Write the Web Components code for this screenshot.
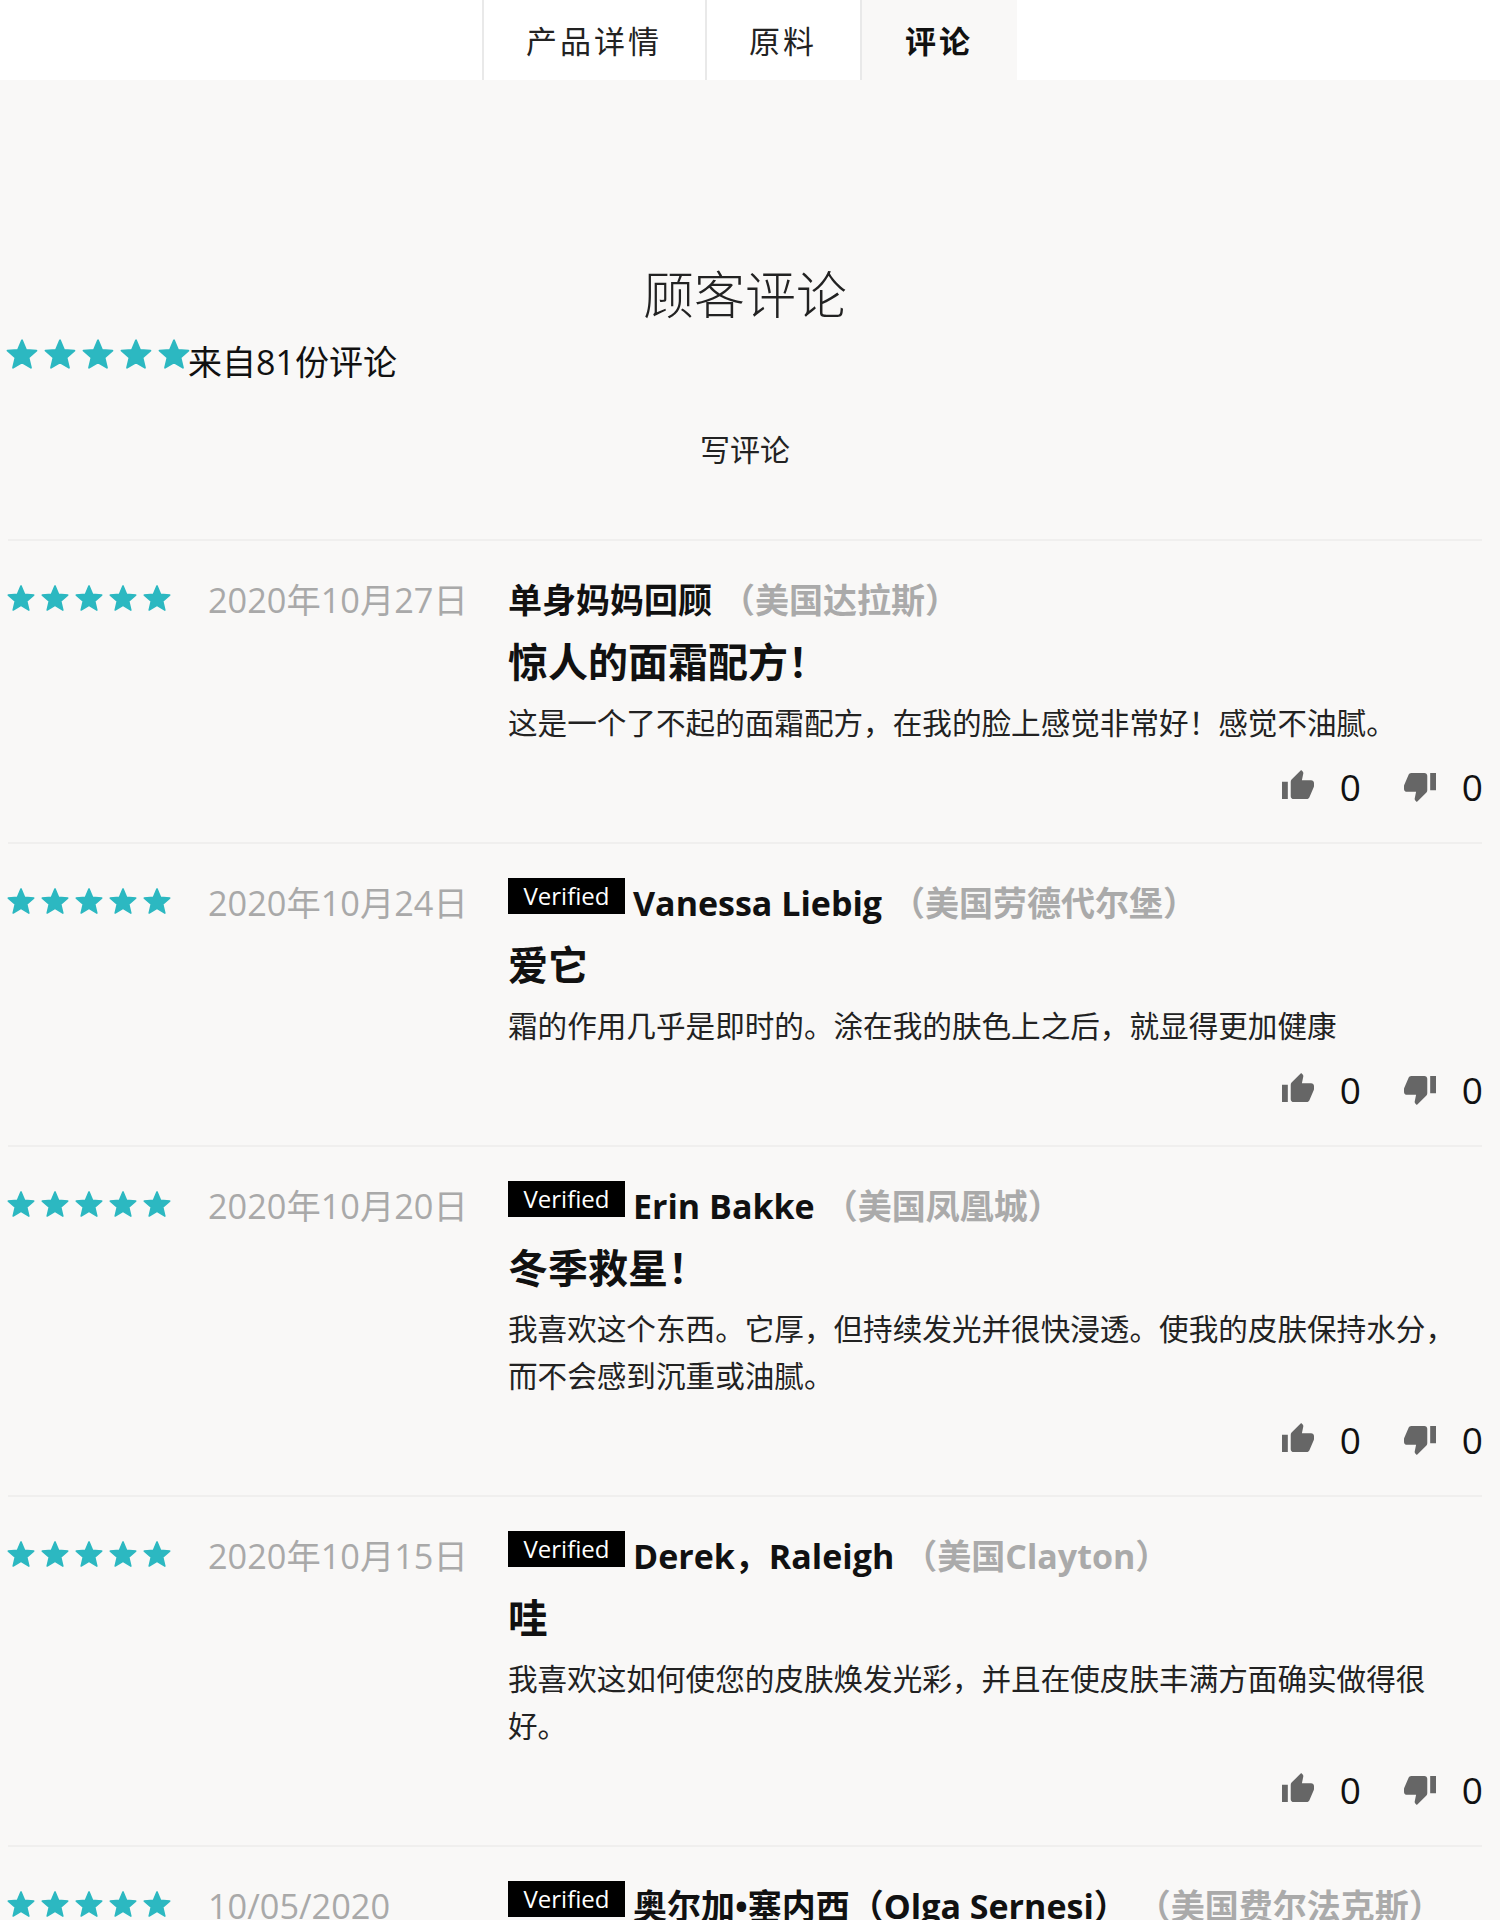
<!DOCTYPE html>
<html lang="zh">
<head>
<meta charset="utf-8">
<title>评论</title>
<style>
  html, body { height: 1920px; overflow: hidden; }
  body {
    margin: 0;
    background: #f9f8f7;
    color: #111;
    font-family: "Open Sans", "Noto Sans CJK SC", sans-serif;
  }
</style>
</head>
<body>
<tab-bar>
  <tab-item style="width:223px">产品详情</tab-item>
  <tab-item style="width:155px">原料</tab-item>
  <tab-item style="width:157px" active>评论</tab-item>
</tab-bar>

<review-list>
  <review-summary count="81"></review-summary>

  <review-card date="2020年10月27日" name="单身妈妈回顾" place="（美国达拉斯）" heading="惊人的面霜配方！">
    这是一个了不起的面霜配方，在我的脸上感觉非常好！感觉不油腻。
  </review-card>
  <review-card verified date="2020年10月24日" name="Vanessa Liebig" place="（美国劳德代尔堡）" heading="爱它">
    霜的作用几乎是即时的。涂在我的肤色上之后，就显得更加健康
  </review-card>
  <review-card verified date="2020年10月20日" name="Erin Bakke" place="（美国凤凰城）" heading="冬季救星！">
    我喜欢这个东西。它厚，但持续发光并很快浸透。使我的皮肤保持水分，而不会感到沉重或油腻。
  </review-card>
  <review-card verified date="2020年10月15日" name="Derek，Raleigh" place="（美国Clayton）" heading="哇">
    我喜欢这如何使您的皮肤焕发光彩，并且在使皮肤丰满方面确实做得很好。
  </review-card>
  <review-card verified date="10/05/2020" name="奥尔加•塞内西（Olga Sernesi）" place="（美国费尔法克斯）" heading="">
  </review-card>
</review-list>

<script>
const STAR = 'M12 17.27L18.18 21l-1.64-7.03L22 9.24l-7.19-.61L12 2 9.19 8.63 2 9.24l5.46 4.73L5.82 21z';
const THUMB_UP = 'M1 21h4V9H1v12zm22-11c0-1.1-.9-2-2-2h-6.31l.95-4.57.03-.32c0-.41-.17-.79-.44-1.06L14.17 1 7.59 7.59C7.22 7.95 7 8.45 7 9v10c0 1.1.9 2 2 2h9c.83 0 1.54-.5 1.84-1.22l3.02-7.05c.09-.23.14-.47.14-.73v-2z';
const THUMB_DOWN = 'M15 3H6c-.83 0-1.54.5-1.84 1.22l-3.02 7.05c-.09.23-.14.47-.14.73v2c0 1.1.9 2 2 2h6.31l-.95 4.57-.03.32c0 .41.17.79.44 1.06L9.83 23l6.59-6.59c.36-.36.58-.86.58-1.41V5c0-1.1-.9-2-2-2zm4 0v12h4V3h-4z';

class TabBar extends HTMLElement {
    constructor() {
        super();
        this.attachShadow({ mode: 'open' }).innerHTML = `
          <style>
            :host {
              display: flex;
              justify-content: center;
              height: 80px;
              padding-right: 2px;
              background: #fff;
            }
          </style>
          <slot></slot>`;
    }
}

class TabItem extends HTMLElement {
    constructor() {
        super();
        this.attachShadow({ mode: 'open' }).innerHTML = `
          <style>
            :host {
              display: flex;
              align-items: center;
              justify-content: center;
              box-sizing: border-box;
              padding-bottom: 2px;
              border-left: 2px solid #e9e9e9;
              font-size: 31px;
              letter-spacing: 3px;
              color: #222;
              background: #fff;
            }
            :host([active]) {
              background: #f9f8f7;
              font-weight: 700;
              color: #111;
            }
          </style>
          <slot></slot>`;
    }
}

class StarRow extends HTMLElement {
    constructor() {
        super();
        const size = Number(this.getAttribute('size')) || 32;
        const stars = Array.from({ length: 5 }, () =>
            `<svg viewBox="1 1 22 21" width="${size}" height="${size}"><path d="${STAR}" fill="#2cb8c1" stroke="#2cb8c1" stroke-width="1.2" stroke-linejoin="round"/></svg>`
        ).join('');
        this.attachShadow({ mode: 'open' }).innerHTML = `
          <style>
            :host { display: inline-flex; gap: var(--star-gap, 4px); line-height: 0; }
            svg { display: block; }
          </style>
          ${stars}`;
    }
}

class ReviewList extends HTMLElement {
    constructor() {
        super();
        this.attachShadow({ mode: 'open' }).innerHTML = `
          <style>
            :host { display: block; padding: 0 18px 0 8px; }
          </style>
          <slot></slot>`;
    }
}

class ReviewSummary extends HTMLElement {
    constructor() {
        super();
        const count = this.getAttribute('count');
        this.attachShadow({ mode: 'open' }).innerHTML = `
          <style>
            :host { display: block; height: 459px; box-sizing: border-box; padding-top: 178px; }
            h2 {
              margin: 0 0 1px;
              text-align: center;
              font-size: 51px;
              font-weight: 300;
              line-height: 72px;
              color: #222;
            }
            .score { display: flex; align-items: flex-start; height: 62px; margin-left: -2px; }
            star-row { --star-gap: 6px; margin-top: 7px; }
            .score span { font-size: 34px; line-height: 62px; color: #111; margin-left: -2px; }
            .write { text-align: center; font-size: 30px; line-height: 40px; margin-top: 37px; color: #222; }
          </style>
          <h2>顾客评论</h2>
          <div class="score"><star-row size="32"></star-row><span>来自${count}份评论</span></div>
          <div class="write">写评论</div>`;
    }
}

class ReviewCard extends HTMLElement {
    constructor() {
        super();
        const attr = (n) => this.getAttribute(n) || '';
        const badge = this.hasAttribute('verified') ? '<b class="badge">Verified</b>' : '';
        this.attachShadow({ mode: 'open' }).innerHTML = `
          <style>
            :host {
              display: grid;
              grid-template-columns: 500px 1fr;
              border-top: 2px solid #f0efee;
              padding: 34px 0 31px;
            }
            .left { display: flex; align-items: flex-start; padding-top: 8px; }
            star-row { --star-gap: 6px; margin-top: 1px; margin-left: -1px; }
            .date { margin-left: 37px; font-size: 34.3px; line-height: 44px; margin-top: -5px; color: #a9a9a9; font-weight: 400; white-space: nowrap; }
            .who { display: flex; align-items: flex-start; height: 50px; white-space: nowrap; }
            .badge {
              width: 117px;
              height: 36px;
              margin-right: 8px;
              background: #000;
              color: #fff;
              font-size: 24px;
              font-weight: 400;
              line-height: 36px;
              text-align: center;
            }
            .name { font-size: 34px; font-weight: 700; line-height: 50px; color: #111; }
            .place { font-size: 34px; font-weight: 700; line-height: 50px; color: #aaa; margin-left: 9px; }
            h3 { margin: 11px 0 0; font-size: 40px; font-weight: 700; line-height: 52px; color: #111; }
            .body { font-size: 29.6px; line-height: 47px; color: #222; margin-top: 11px; }
            .votes { display: flex; justify-content: flex-end; align-items: center; gap: 43px; height: 50px; margin: 15px -1px 0 0; font-size: 37px; color: #111; }
            .vote { display: flex; align-items: center; gap: 26px; }
            svg { display: block; }
          </style>
          <div class="left"><star-row size="28"></star-row><div class="date">${attr('date')}</div></div>
          <div>
            <div class="who">${badge}<span class="name">${attr('name')}</span><span class="place">${attr('place')}</span></div>
            <h3>${attr('heading')}</h3>
            <div class="body"><slot></slot></div>
            <div class="votes">
              <div class="vote"><svg viewBox="1 1 22 22" width="32" height="32"><path d="${THUMB_UP}" fill="#666"/></svg><span>0</span></div>
              <div class="vote"><svg viewBox="1 1 22 22" width="32" height="32"><path d="${THUMB_DOWN}" fill="#666"/></svg><span>0</span></div>
            </div>
          </div>`;
    }
}

customElements.define('tab-bar', TabBar);
customElements.define('tab-item', TabItem);
customElements.define('star-row', StarRow);
customElements.define('review-list', ReviewList);
customElements.define('review-summary', ReviewSummary);
customElements.define('review-card', ReviewCard);
</script>
</body>
</html>
